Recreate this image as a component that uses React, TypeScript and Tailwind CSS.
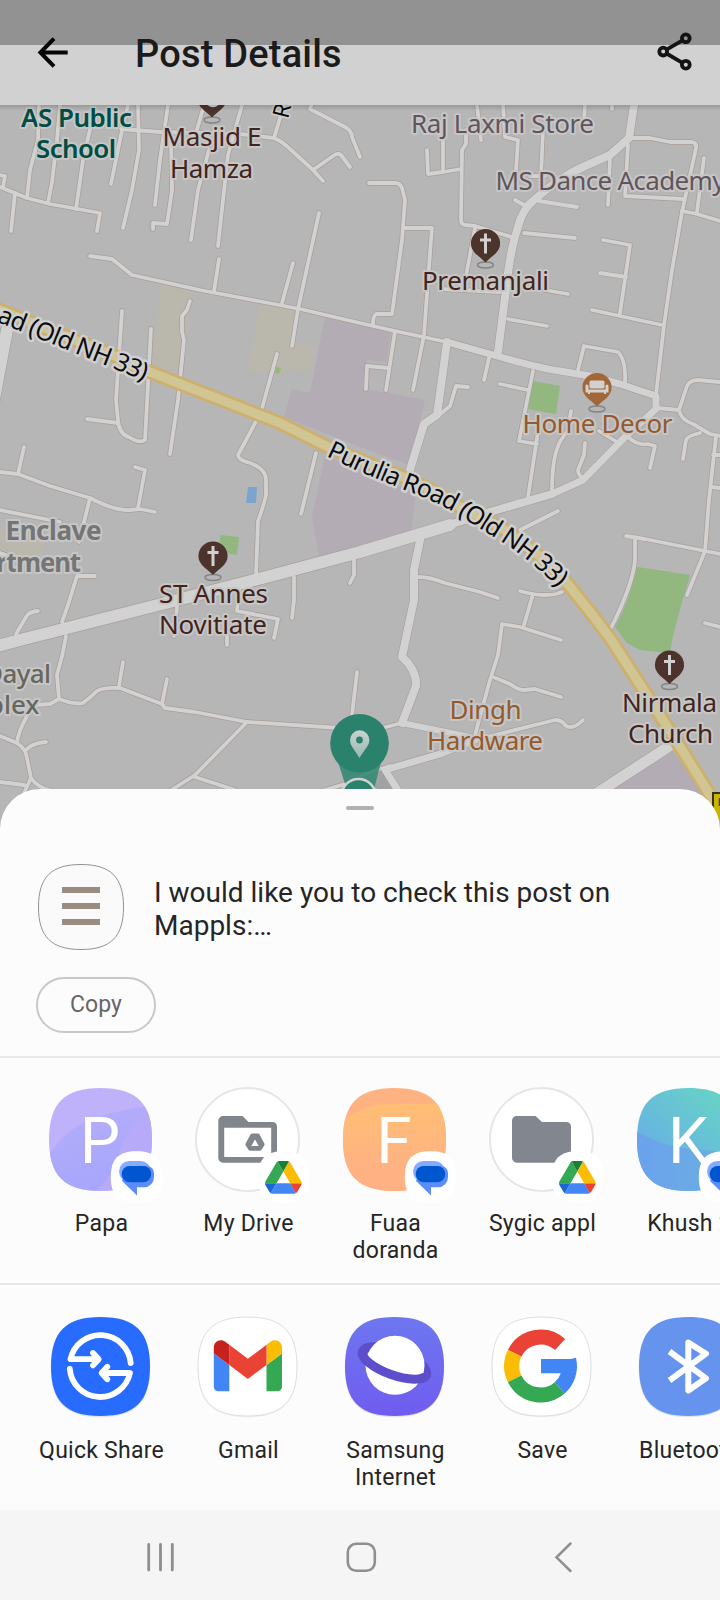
import React from "react";

const SQUIRCLE = "M50 0C85 0 100 15 100 50S85 100 50 100 0 85 0 50 15 0 50 0Z";

const THIN_ROADS = [
  "M39 105L38 140 30 170 27 198", "M60 105L57 140 52 182 48 203", "M91 125L83 160 76 209",
  "M128 105L121 135 111 184", "M138 105L139 150 132 190 123 228", "M168 105L160 160 155 205",
  "M171 140L172 190 167 224 153 223 153 229", "M204 105L194 140M209 150L198 190 191 240",
  "M242 105L228 155 223 200 218 246", "M121 129L160 132 240 134 274 138Q283 142 290 149L313 170 323 181",
  "M274 138L284 105", "M313 170L333 156Q338 152 341 155L350 167", "M313 100L310 109 345 127Q352 131 352 137L360 157",
  "M0 187L27 198 50 204 100 213 97 231", "M15 193L11 231", "M0 175L5 176 3 187",
  "M90 256L112 259 132 275 200 290 258 301 300 309 360 323 395 331 447 342",
  "M219 259L214 291", "M293 263L282 303", "M319 213L298 309 292 346",
  "M477 105L481 140", "M503 105L505 137 518 140 516 170", "M543 130L541 176M530 176L545 176",
  "M466 130V144L462 150 461 220Q461 225 466 225L475 226 515 238",
  "M427 150L428 174 443 172 461 169M443 140V172",
  "M369 183H395Q400 183 402 188L405 200 402 240 392 314 376 314Q373 316 373 325",
  "M403 228H432L431 240 424 335 413 390", "M475 228L466 276", "M442 289L500 292",
  "M585 105L584 120M612 100V109",
  "M629 138H650L670 142 692 142Q697 143 696 148L682 212 672 270 664 325 656 395",
  "M628 145L625 196 683 199", "M704 158L697 212M682 211L697 214 720 221", "M610 158L608 205",
  "M515 200L526 206M539 201L577 207M524 233L575 238M545 290L568 294",
  "M603 240L630 245 620 313M600 273L626 277",
  "M122 311L116 400 118 420Q119 434 129 437Q139 444 145 440L151 329", "M87 419L118 423",
  "M190 301L187 310 182 316V332L184 340 178 400 170 454",
  "M277 354L261 412 238 455Q238 460 250 463Q266 469 266 480V495Q264 505 258 521L256 575",
  "M316 453L301 514", "M0 472L18 474 50 486 90 498Q115 511 130 510L140 509 155 512",
  "M24 447L18 474M135 467L145 470 138 508M90 498L79 542", "M0 510L60 522M0 553L14 558",
  "M395 331L386 390M388 368L367 366 366 389", "M489 358L484 380M500 384L528 390",
  "M533 371L519 441 537 444M539 425L528 497", "M468 387L456 386 450 406 438 416",
  "M578 370L584 346 618 352Q626 360 625 382",
  "M571 411L568 430 561 440Q552 455 552 490", "M585 443L584 455 578 470Q578 475 582 477",
  "M599 431L617 442M628 437Q638 446 648 444L655 446 650 468",
  "M658 408L679 410 687 386Q690 380 698 380L720 382",
  "M679 410Q681 420 693 424L710 434 720 436M700 433Q687 436 686 440L683 459",
  "M716 436L709 500 705 551M713 455H720M711 487L720 488", "M592 310L662 325M508 319L547 326",
  "M558 511L520 530", "M626 536L645 539 705 551 720 554M635 539V560Q633 585 610 630M705 551L687 595",
  "M419 577Q430 577 445 583L480 592 498 598",
  "M520 591Q540 597 556 594L562 592M533 594L524 625",
  "M561 640L520 627 502 624 498 655 490 680 475 735",
  "M493 677L510 684Q518 690 524 690L535 689 561 697",
  "M475 740L555 720Q562 720 565 725Q572 731 583 720", "M705 623L720 627", "M370 731L402 723",
  "M95 576L77 576 68 605 62 622", "M38 611Q28 612 26 617L16 634",
  "M66 636Q63 655 57 675L59 699", "M35 705L50 704 59 699Q75 705 83 703Q90 698 97 691Q103 687 120 688L162 704 165 708 195 712 247 722 340 728",
  "M27 716Q18 732 17 743", "M0 736L17 743Q26 749 27 758L31 778Q38 788 50 790M26 750Q32 743 46 742M0 782L24 785M31 778L23 795",
  "M123 662L119 686M167 679L162 704", "M247 722L195 775 170 791M195 777L235 790", "M357 672L352 715",
  "M177 607L174 636M238 600L237 611 278 619 274 638M227 634V645",
  "M294 577V600L292 618M354 560V575L350 583", "M315 793L345 784M360 776L390 766M365 782L385 795",
];

const THICK_ROADS: [string, number][] = [
  ["M634 105L629 138 610 155 585 166Q560 177 534 200Q523 208 518 227Q510 250 506 290L498 352", 8],
  ["M447 342L497 356Q540 368 560 371L590 376 620 384 656 396V409L625 437 583 480Q570 486 552 494", 7],
  ["M447 342L437 415 424 424 409 473", 8],
  ["M552 494L490 512 430 531", 8],
  ["M450 525L430 531 360 552 270 576 150 607 20 640 -10 648", 12],
  ["M420 540L414 570V600L402 657Q417 670 416 686L402 723", 8],
  ["M402 723L470 737", 6], ["M385 770L440 754 475 740M385 770L401 795", 7],
  ["M588 799L668 747", 11], ["M7 330L-9 415", 12],
];

const HIGHWAY = "M-10 306L45 328 110 354 150 372 280 423 328 447 360 460 403 477Q435 490 460 507L500 527Q543 555 567 583Q590 611 610 638L650 700 677 742 707 790 725 820";

type LabelProps = { x: number; y: number; w?: number; fill: string; anchor?: "start" | "middle" | "end"; weight?: number; children: string };

function MapLabel({ x, y, w, fill, anchor = "start", weight = 400, children }: LabelProps) {
  return (
    <text x={x} y={y} textLength={w} textAnchor={anchor} fill={fill} fontSize={26} fontWeight={weight}
      stroke="#c6c6c6" strokeWidth={4} strokeLinejoin="round" paintOrder="stroke">{children}</text>
  );
}

function PoiPin({ x, y, color, kind }: { x: number; y: number; color: string; kind: "church" | "sofa" | "mosque" }) {
  return (
    <g transform={`translate(${x} ${y})`}>
      <ellipse cx={0} cy={22} rx={8} ry={3} fill="none" stroke="#858585" strokeWidth={1.4} />
      <path d="M-14.6 0.500A14.6 14.6 0 1 1 14.6 0.500C14.6 9.500 6 13 0 19.500C-6 13-14.600 9.500-14.600 0.500Z" fill={color} />
      {kind === "church" && <path d="M0-9.500V10.500M-5.500-3H5.500" stroke="#d1d1d1" strokeWidth={3} fill="none" />}
      {kind === "sofa" && (
        <g fill="#d1d1d1">
          <rect x={-7.500} y={-6.500} width={15} height={8} rx={1.500} />
          <path d="M-11.500-1.500Q-11.500-2.500-10-2.500T-8.500-1V2.500H8.500V-1Q8.500-2.500 10-2.500T11.500-1V5.500H9V7H7V5.500H-7V7H-9V5.500H-11.500Z" />
        </g>
      )}
      {kind === "mosque" && <circle cx={1} cy={2} r={6} fill="none" stroke="#d1d1d1" strokeWidth={2.500} />}
    </g>
  );
}

function CityMap() {
  const brown = "#42231b";
  return (
    <svg viewBox="0 105 720 735" className="block h-[735px] w-full shrink-0 bg-[#b6b6b6] font-['Noto_Sans',sans-serif]">
      <defs>
        <path id="hw-west" d="M-54 301L0 323 77 354 115 369 144 381" />
        <path id="hw-east" d="M326 456L360 472 407 491Q445 505 463 518L505 544Q535 563 566 596" />
        <linearGradient id="bar-shade" x1="0" y1="0" x2="0" y2="1">
          <stop offset="0" stopColor="#000" stopOpacity=".16" /><stop offset="1" stopColor="#000" stopOpacity="0" />
        </linearGradient>
        <linearGradient id="drop" x1="0" y1="0" x2="0" y2="1">
          <stop offset="0" stopColor="#c9d3cf" /><stop offset="1" stopColor="#9bb9b0" />
        </linearGradient>
      </defs>
      <g fill="#bab7ad">
        <path d="M161 284L192 291 189 325 177 373 152 364Z" />
        <path d="M260 304L298 309 292 343 315 346 310 373 287 370 285 376 247 371Z" />
        <path d="M0 530L46 540 41 560 0 553Z" />
      </g>
      <g fill="#b3acb4">
        <path d="M325 317L391 333 386 362 367 360 362 388 425 400 409 465 360 447 284 417 292 389 310 393Z" />
        <path d="M325 455L416 492 411 532 319 557 312 517Z" />
        <path d="M606 794L670 747 703 794Z" />
      </g>
      <g fill="#92b77f">
        <path d="M533 381L560 386 556 414 528 409Z" /><path d="M220 535L239 537 237 555 220 552Z" />
        <path d="M637 567L690 575Q678 615 672 640L670 653 640 650 627 643 615 627Q630 600 637 567Z" />
        <path d="M276 367L281 368 279 374 275 373Z" />
      </g>
      <path d="M248 487H257L256 503H246Z" fill="#7ba5cf" />
      <g fill="none" strokeLinecap="round" strokeLinejoin="round">
        <g stroke="#aa9e98">
          {THIN_ROADS.map((d) => <path key={d} d={d} strokeWidth={5.300} />)}
          {THICK_ROADS.map(([d, w]) => <path key={d} d={d} strokeWidth={w + 1.200} />)}
        </g>
        <g stroke="#d2d2d2">
          {THIN_ROADS.map((d) => <path key={d} d={d} strokeWidth={3.800} />)}
          {THICK_ROADS.map(([d, w]) => <path key={d} d={d} strokeWidth={w} />)}
        </g>
        <path d={HIGHWAY} stroke="#ccb06c" strokeWidth={14.500} />
        <path d={HIGHWAY} stroke="#d1c594" strokeWidth={9} />
      </g>

      <PoiPin x={212} y={98} color="#4c332c" kind="mosque" />
      <PoiPin x={485.500} y={243} color="#4c332c" kind="church" />
      <PoiPin x={213} y={555.500} color="#4c332c" kind="church" />
      <PoiPin x={669.500} y={664.500} color="#4c332c" kind="church" />
      <PoiPin x={597} y={387} color="#a26738" kind="sofa" />

      <g transform="translate(0 .7)">
        <MapLabel x={21} y={126} w={111} fill="#004d43" weight={600}>AS Public</MapLabel>
        <MapLabel x={36} y={157} w={80} fill="#004d43" weight={600}>School</MapLabel>
        <MapLabel x={162.500} y={145} w={99} fill={brown}>Masjid E</MapLabel>
        <MapLabel x={170} y={177} w={83} fill={brown}>Hamza</MapLabel>
        <MapLabel x={411} y={132} w={183} fill="#62545d">Raj Laxmi Store</MapLabel>
        <MapLabel x={495.500} y={189} w={230} fill="#62545d">MS Dance Academy</MapLabel>
        <MapLabel x={422} y={289} w={127} fill={brown}>Premanjali</MapLabel>
        <MapLabel x={522.500} y={432} w={150} fill="#95592b">Home Decor</MapLabel>
        <MapLabel x={5.500} y={539} w={96} fill="#757575" weight={700}>Enclave</MapLabel>
        <MapLabel x={81} y={571} w={131} fill="#757575" anchor="end" weight={700}>Apartment</MapLabel>
        <MapLabel x={51} y={682} w={67} fill="#66675d" anchor="end" weight={500}>Dayal</MapLabel>
        <MapLabel x={39.500} y={713} fill="#66675d" anchor="end" weight={500}>Complex</MapLabel>
        <MapLabel x={159} y={602} w={109} fill={brown}>ST Annes</MapLabel>
        <MapLabel x={159} y={633} w={108} fill={brown}>Novitiate</MapLabel>
        <MapLabel x={449.500} y={718} w={72} fill="#95592b">Dingh</MapLabel>
        <MapLabel x={427} y={749} w={116} fill="#95592b">Hardware</MapLabel>
        <MapLabel x={622} y={711} w={95} fill={brown}>Nirmala</MapLabel>
        <MapLabel x={628} y={742} w={85} fill={brown}>Church</MapLabel>
      </g>

      <g fill="#0b0b0b" stroke="#cfcfcf" strokeWidth={5} strokeLinejoin="round" paintOrder="stroke" fontSize={25}>
        <text textAnchor="end"><textPath href="#hw-west" startOffset="100%" textLength={188}>Road (Old NH 33)</textPath></text>
        <text><textPath href="#hw-east" textLength={269}>Purulia Road (Old NH 33)</textPath></text>
        <text transform="translate(288 119.500) rotate(-76)" fontSize={23} strokeWidth={3}>Ro</text>
      </g>

      <path d="M338 762L347 790H374L381 762Z" fill="#2f8570" opacity=".85" />
      <path d="M374 790L380 768 392 789Z" fill="#8b8b8b" opacity=".45" />
      <circle cx={359.500} cy={743.300} r={29.300} fill="#2a826c" />
      <path d="M359.500 758C355 750 350 746 350 740A9.700 9.700 0 0 1 369.400 740C369.400 746 364 750 359.500 758Z" fill="url(#drop)" />
      <circle cx={359.500} cy={740} r={3.400} fill="#2a826c" />
      <circle cx={358.500} cy={796} r={17} fill="#2a826c" stroke="#cfd3d1" strokeWidth={2.500} />
      <rect x={713} y={793} width={20} height={46} fill="#c9b400" stroke="#36321d" strokeWidth={2} />
      <path d="M719.500 798V806" stroke="#4a430d" strokeWidth={1.500} />
      <rect x={0} y={105} width={720} height={6} fill="url(#bar-shade)" />
    </svg>
  );
}

function AppBar() {
  return (
    <header className="flex h-[105px] w-full shrink-0 items-center bg-[linear-gradient(#929292_45px,#d1d1d1_45px)] pr-[26px] pl-[36px]">
      <svg viewBox="36 36 34 34" className="size-[34px]" fill="none" stroke="#050505" strokeWidth={4}>
        <path d="M67.700 52.500H41M54 38.600L40.400 52.500 54 66.300" />
      </svg>
      <h1 className="mt-[3px] ml-[65px] flex-1 text-[38px] leading-[46px] font-medium tracking-[0.2px] text-[#1b1b1b] font-[Roboto,sans-serif]">Post Details</h1>
      <svg viewBox="656 31 38 42" className="-mt-px h-[42px] w-[38px]" fill="none" stroke="#141414" strokeWidth={3.800}>
        <circle cx={685.800} cy={38.300} r={3.900} /><circle cx={663.200} cy={51.600} r={3.900} /><circle cx={685.800} cy={64.700} r={3.900} />
        <path d="M666.500 49.700L682.500 40.300M666.500 53.500L682.500 62.800" />
      </svg>
    </header>
  );
}

function MessagesBadge() {
  return (
    <g>
      <path d={SQUIRCLE} transform="translate(82.800 66.200) scale(.515)" fill="#fff" />
      <rect x={91} y={76} width={32} height={21} rx={10.500} fill="#85aaff" />
      <path d="M100 81H119A7 7 0 0 1 126 88V92A10 10 0 0 1 116 102.300H109V110.500L94 96Z" fill="#5b8dff" />
      <rect x={93.700} y={81} width={29.500} height={16.300} rx={8.100} fill="#0056cf" />
    </g>
  );
}

function DriveBadge() {
  return (
    <g>
      <path d={SQUIRCLE} transform="translate(83 66.200) scale(.515)" fill="#fff" />
      <g transform="translate(90 76) scale(.42)">
        <path d="m6.600 66.850 3.850 6.650c.8 1.400 1.950 2.500 3.300 3.300l13.750-23.800h-27.500c0 1.550.4 3.100 1.200 4.500z" fill="#1967d2" />
        <path d="m43.650 25-13.750-23.800c-1.350.8-2.500 1.900-3.300 3.300l-25.400 44a9.060 9.060 0 0 0-1.200 4.500h27.500z" fill="#34a853" />
        <path d="m73.550 76.800c1.350-.8 2.500-1.900 3.300-3.300l1.600-2.750 7.650-13.250c.8-1.400 1.200-2.950 1.200-4.500h-27.500l5.850 11.500z" fill="#ea4335" />
        <path d="m43.650 25 13.750-23.800c-1.350-.8-2.900-1.200-4.500-1.200h-18.500c-1.600 0-3.150.45-4.500 1.200z" fill="#188038" />
        <path d="m59.800 53h-32.300l-13.750 23.800c1.350.8 2.900 1.200 4.500 1.200h50.800c1.600 0 3.150-.45 4.500-1.200z" fill="#4285f4" />
        <path d="m73.400 26.500-12.700-22c-.8-1.400-1.950-2.500-3.300-3.300l-13.750 23.800 16.150 28h27.450c0-1.550-.4-3.100-1.200-4.500z" fill="#fbbc04" />
      </g>
    </g>
  );
}

function Letter({ children }: { children: string }) {
  return <text x={72} y={77.700} textAnchor="middle" fontSize={64} fill="#fff" className="font-[Roboto,sans-serif]">{children}</text>;
}

function Contact({ id, letter, children }: { id: string; letter: string; children: React.ReactNode }) {
  return (
    <>
      <clipPath id={id}><path d={SQUIRCLE} transform="translate(21 3) scale(1.030)" /></clipPath>
      <g clipPath={`url(#${id})`}>{children}</g>
      <Letter>{letter}</Letter>
      <MessagesBadge />
    </>
  );
}

const people = [
  {
    label: "Papa",
    icon: (
      <Contact id="c-papa" letter="P">
        <linearGradient id="g-papa" x1="0" y1="0" x2=".3" y2="1"><stop offset="0" stopColor="#b6aef9" /><stop offset="1" stopColor="#a6a6fc" /></linearGradient>
        <rect width={147} height={120} fill="#c0b2fa" />
        <path d="M20 72C40 35 75 28 125 20V30C100 38 90 70 88 80Q80 98 62 110H20Z" fill="url(#g-papa)" />
        <path d="M125 24C95 40 92 70 86 84Q78 98 66 107H125Z" fill="#b7abf9" />
      </Contact>
    ),
  },
  {
    label: "My Drive",
    icon: (
      <>
        <circle cx={72.500} cy={54.500} r={51.500} fill="#fff" stroke="#e6e6e6" strokeWidth={2} />
        <path d="M48 31H67.500L73.500 37H97.500A4.500 4.500 0 0 1 102 41.500V73A4.700 4.700 0 0 1 97.300 77.700H48A4.700 4.700 0 0 1 43.300 73V35.700A4.700 4.700 0 0 1 48 31ZM49.200 42.700V72H96.200V42.700Z" fill="#80868c" fillRule="evenodd" />
        <path d="M77.500 51H82.500L87 59.500 84.500 63.300H75.500L73 59.500Z" fill="#80868c" stroke="#80868c" strokeWidth={5} strokeLinejoin="round" />
        <path d="M80 54.500L83.700 61H76.300Z" fill="#fff" />
        <DriveBadge />
      </>
    ),
  },
  {
    label: "Fuaa doranda",
    icon: (
      <Contact id="c-fuaa" letter="F">
        <linearGradient id="g-fuaa" x1="0" y1="0" x2="0" y2="1"><stop offset="0" stopColor="#ffbe75" /><stop offset=".75" stopColor="#ffb183" /></linearGradient>
        <rect width={147} height={120} fill="#ffb281" />
        <path d="M20 38Q38 20 65 19H125V110H20Z" fill="url(#g-fuaa)" />
      </Contact>
    ),
  },
  {
    label: "Sygic appl",
    icon: (
      <>
        <circle cx={72.500} cy={54.500} r={51.500} fill="#fff" stroke="#e6e6e6" strokeWidth={2} />
        <path d="M47.800 31H66.500L73 37H97.500A4.500 4.500 0 0 1 102 41.500V73A4.700 4.700 0 0 1 97.300 77.700H47.800A4.700 4.700 0 0 1 43 73V35.700A4.700 4.700 0 0 1 47.800 31Z" fill="#82868e" />
        <DriveBadge />
      </>
    ),
  },
  {
    label: "Khush 2",
    icon: (
      <Contact id="c-khush" letter="K">
        <linearGradient id="g-khush" x1="0" y1="1" x2="1" y2="0"><stop offset=".25" stopColor="#68abe8" /><stop offset=".8" stopColor="#67d2c8" /></linearGradient>
        <linearGradient id="g-khush2" x1="0" y1="0" x2="1" y2="0"><stop offset="0" stopColor="#6ba1ed" /><stop offset="1" stopColor="#69b2df" /></linearGradient>
        <rect width={147} height={120} fill="url(#g-khush)" />
        <path d="M15 43Q45 62 75 64T130 70V110H15Z" fill="url(#g-khush2)" />
      </Contact>
    ),
  },
];

function Plate({ fill, light = false }: { fill: string; light?: boolean }) {
  return (
    <>
      <path d={SQUIRCLE} transform="translate(22.700 5.700) scale(.995)" fill="#000" opacity={light ? 0.06 : 0.1} />
      <path d={SQUIRCLE} transform="translate(23 5) scale(.99)" fill={fill} stroke={light ? "#dedede" : "none"} strokeWidth={1} />
    </>
  );
}

const apps = [
  {
    label: "Quick Share",
    icon: (
      <>
        <Plate fill="#276cff" />
        <g fill="none" stroke="#fff" strokeWidth={5.800} strokeLinecap="round" strokeLinejoin="round">
          <path d="M102.700 51A30.500 30.500 0 0 0 42.500 47.200H69.500M65 41L70.700 47.200 65 53.400" />
          <path d="M41.800 57A30.500 30.500 0 0 0 102 61H75M79.300 54.800L73.600 61 79.300 67.300" />
        </g>
      </>
    ),
  },
  {
    label: "Gmail",
    icon: (
      <>
        <Plate fill="#fff" light />
        <g transform="translate(38.800 28.200) scale(.775) translate(-52 -42)">
          <path fill="#4285f4" d="M58 108h14V74L52 59v43c0 3.320 2.690 6 6 6" />
          <path fill="#34a853" d="M120 108h14c3.320 0 6-2.690 6-6V59l-20 15" />
          <path fill="#fbbc04" d="M120 48v26l20-15v-8c0-7.420-8.470-11.650-14.400-7.200" />
          <path fill="#ea4335" d="M72 74V48l24 18 24-18v26L96 92" />
          <path fill="#c5221f" d="M52 51v8l20 15V48l-5.600-4.200c-5.940-4.450-14.400-.22-14.400 7.200" />
        </g>
      </>
    ),
  },
  {
    label: "Samsung Internet",
    icon: (
      <>
        <linearGradient id="g-sam" x1="0" y1="0" x2="0" y2="1"><stop offset="0" stopColor="#6d77f0" /><stop offset="1" stopColor="#705cef" /></linearGradient>
        <Plate fill="url(#g-sam)" />
        <ellipse transform="rotate(20 72.500 51)" cx={72.500} cy={51} rx={34} ry={12} fill="none" stroke="#5d4ecb" strokeWidth={9} />
        <circle cx={73} cy={53.300} r={29.500} fill="#fff" />
        <path transform="rotate(20 72.500 51)" d="M38.500 51A34 12 0 0 0 106.500 51" fill="none" stroke="#5d4ecb" strokeWidth={9} />
      </>
    ),
  },
  {
    label: "Save",
    icon: (
      <>
        <Plate fill="#fff" light />
        <g fill="none" strokeWidth={15}>
          <path d="M91.100 32.450A29 29 0 0 0 45.600 41.300" stroke="#ea4335" />
          <path d="M45.600 41.300A29 29 0 0 0 45.600 66.700" stroke="#fbbc04" />
          <path d="M90.700 75.900A29 29 0 0 0 99.700 47.500" stroke="#4285f4" />
          <path d="M45.600 66.700A29 29 0 0 0 90.700 75.900" stroke="#34a853" />
        </g>
        <path d="M72 47H106.500V61.300H72Z" fill="#4285f4" />
      </>
    ),
  },
  {
    label: "Bluetooth",
    icon: (
      <>
        <Plate fill="#6693ed" />
        <path d="M53.500 39.500L90 66.300 72.300 78.500V30.500L90 41.700 53.500 68.500" fill="none" stroke="#fff" strokeWidth={6} strokeLinejoin="round" />
      </>
    ),
  },
];

function ShareRow({ items }: { items: { label: string; icon: React.ReactNode }[] }) {
  return (
    <ul className="flex w-full overflow-hidden pt-[27px] pl-[28px]">
      {items.map(({ label, icon }) => (
        <li key={label} className="flex w-[147px] shrink-0 flex-col items-center">
          <svg viewBox="0 0 147 120" className="block h-[120px] w-[147px]">{icon}</svg>
          <span className="mt-[5px] w-[132px] text-center text-[23px] leading-[27px] tracking-[0.25px] text-[#252525]">{label}</span>
        </li>
      ))}
    </ul>
  );
}

function ShareSheet() {
  return (
    <section className="relative -mt-[51px] flex h-[721px] w-full shrink-0 flex-col rounded-t-[40px] bg-[#fcfcfc] font-[Roboto,sans-serif]">
      <div className="mx-auto mt-[17px] h-[4px] w-[28px] rounded-full bg-[#b2b2b2]" />
      <div className="mt-[53px] flex h-[88px] items-center pl-[37px]">
        <svg viewBox="0 0 88 88" className="size-[88px]">
          <path d={SQUIRCLE} transform="translate(1.500 1.500) scale(.850 .850)" fill="#fafafa" stroke="#909090" strokeWidth={1.150} />
          <path d="M25 27H63M25 43H63M25 59H63" stroke="#998c82" strokeWidth={6} />
        </svg>
        <p className="mt-[3px] ml-[29px] w-[480px] text-[28px] leading-[33px] text-[#252525]">I would like you to check this post on Mappls:…</p>
      </div>
      <button className="mt-[26px] ml-[36px] h-[56px] w-[120px] rounded-full border-2 border-[#c8c8c8] pt-px text-[23px] text-[#666]">Copy</button>
      <div className="mt-[23px] h-[2px] w-full shrink-0 bg-[#e6e6e6]" />
      <div className="h-[225px] shrink-0"><ShareRow items={people} /></div>
      <div className="h-[2px] w-full shrink-0 bg-[#e6e6e6]" />
      <ShareRow items={apps} />
    </section>
  );
}

function NavBar() {
  return (
    <nav className="flex h-[90px] w-full shrink-0 items-center justify-between bg-[#f5f5f5] pt-[3px] pr-[141px] pl-[142px]">
      <svg viewBox="0 0 36 36" className="size-[36px]" fill="none" stroke="#8f8f8f" strokeWidth={2.800} strokeLinecap="round"><path d="M6.700 5.500V31M18.500 5.500V31M30.300 5.500V31" /></svg>
      <svg viewBox="0 0 36 36" className="size-[36px]" fill="none" stroke="#8f8f8f" strokeWidth={2.600}><rect x={4.800} y={4.800} width={27} height={27} rx={8.500} /></svg>
      <svg viewBox="0 0 36 36" className="size-[36px]" fill="none" stroke="#8f8f8f" strokeWidth={2.500} strokeLinecap="round"><path d="M27.500 4.500L13.500 18.300 27.500 32" /></svg>
    </nav>
  );
}

export default function App() {
  return (
    <main className="flex h-[1600px] w-[720px] flex-col overflow-hidden bg-[#fcfcfc]">
      <AppBar />
      <CityMap />
      <ShareSheet />
      <NavBar />
    </main>
  );
}
